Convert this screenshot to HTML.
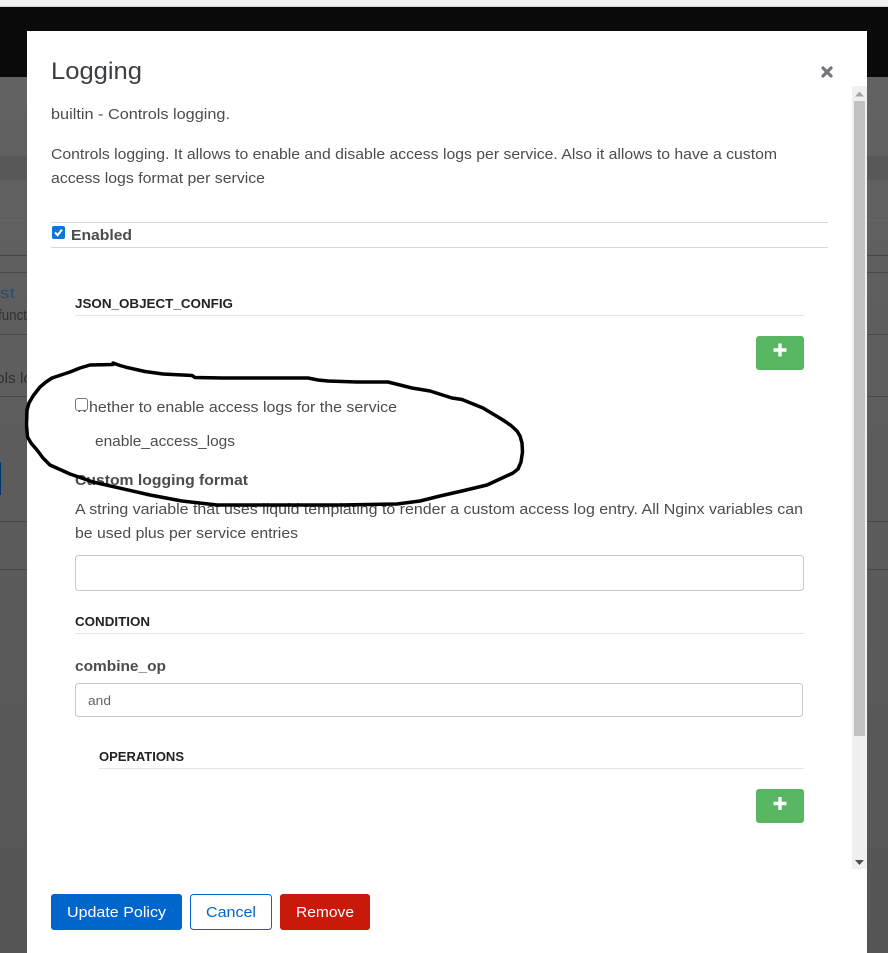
<!DOCTYPE html>
<html lang="en">
<head>
<meta charset="utf-8">
<title>Logging</title>
<style>
html,body{margin:0;padding:0;width:888px;height:953px;overflow:hidden;background:#5a5a5a}
svg{display:block}
text{font-family:"Liberation Sans",sans-serif;font-size:15px;fill:#4a4d50}
.b{font-weight:bold}
.h{font-weight:bold;font-size:13px;fill:#222}
</style>
</head>
<body>
<svg width="888" height="953" viewBox="0 0 888 953" xmlns="http://www.w3.org/2000/svg">
<defs>
<linearGradient id="bg" x1="0" y1="0" x2="0" y2="1"><stop offset="0" stop-color="#636363"/><stop offset="1" stop-color="#555"/></linearGradient>
</defs>
<rect width="888" height="953" fill="url(#bg)"/>
<rect width="888" height="6" fill="#f5f3f1"/>
<rect y="6" width="888" height="1" fill="#d8d2cc"/>
<rect y="7" width="888" height="70" fill="#0a0a0a"/>
<rect y="156" width="888" height="24" fill="#585858"/>
<rect y="220" width="888" height="1" fill="#666"/>
<rect y="255" width="888" height="1" fill="#444"/>
<rect y="272" width="888" height="1" fill="#484848"/>
<rect y="334" width="888" height="1" fill="#484848"/>
<rect y="396" width="888" height="1" fill="#484848"/>
<rect y="521" width="888" height="1" fill="#484848"/>
<rect y="569" width="888" height="1" fill="#484848"/>
<rect y="462" width="1" height="33" fill="#00366b"/>
<text x="0" y="298" style="fill:#2b4a70" textLength="15" lengthAdjust="spacingAndGlyphs">st</text>
<text x="-2" y="320" style="fill:#2f2f2f" textLength="29" lengthAdjust="spacingAndGlyphs">funct</text>
<text x="-4" y="383" style="fill:#2f2f2f" textLength="36" lengthAdjust="spacingAndGlyphs">ols lo</text>

<rect x="27" y="31" width="840" height="922" fill="#fff"/>

<text x="51" y="79" style="font-size:24px;fill:#3c3f42" textLength="91" lengthAdjust="spacingAndGlyphs">Logging</text>
<path d="M823 68L831 76M831 68L823 76" stroke="#72767b" stroke-width="3.200" fill="none" stroke-linecap="round"/>

<text x="51" y="119" textLength="179" lengthAdjust="spacingAndGlyphs">builtin - Controls logging.</text>
<text x="51" y="159" textLength="726" lengthAdjust="spacingAndGlyphs">Controls logging. It allows to enable and disable access logs per service. Also it allows to have a custom</text>
<text x="51" y="183" textLength="214" lengthAdjust="spacingAndGlyphs">access logs format per service</text>

<rect x="51" y="222" width="777" height="1" fill="#d9d9d9"/>
<rect x="51" y="247" width="777" height="1" fill="#d9d9d9"/>
<rect x="52" y="226" width="13" height="13" rx="2" fill="#0b76e0"/>
<path d="M55 232.500L57.600 235.200L62 229.600" stroke="#fff" stroke-width="2.100" fill="none"/>
<text class="b" x="71" y="240" textLength="61" lengthAdjust="spacingAndGlyphs">Enabled</text>

<text class="h" x="75" y="308" textLength="158" lengthAdjust="spacingAndGlyphs">JSON_OBJECT_CONFIG</text>
<rect x="75" y="315" width="729" height="1" fill="#e4e4e4"/>
<rect x="756" y="336" width="48" height="34" rx="3" fill="#58b561"/>
<path d="M773.500 350H786.500M780 343.500V356.500" stroke="#fff" stroke-width="3.400" fill="none"/>

<text x="76" y="412" textLength="12" lengthAdjust="spacingAndGlyphs">W</text>
<rect x="75.500" y="398.500" width="12" height="12" rx="2.500" fill="#fff" stroke="#777"/>
<text x="89" y="412" textLength="308" lengthAdjust="spacingAndGlyphs">hether to enable access logs for the service</text>
<text x="95" y="446" textLength="140" lengthAdjust="spacingAndGlyphs">enable_access_logs</text>

<text class="b" x="75" y="485" textLength="173" lengthAdjust="spacingAndGlyphs">Custom logging format</text>
<text x="75" y="514" textLength="728" lengthAdjust="spacingAndGlyphs">A string variable that uses liquid templating to render a custom access log entry. All Nginx variables can</text>
<text x="75" y="538" textLength="223" lengthAdjust="spacingAndGlyphs">be used plus per service entries</text>
<rect x="75.500" y="555.500" width="728" height="35" rx="3" fill="#fff" stroke="#c8c8c8"/>

<text class="h" x="75" y="626" textLength="75" lengthAdjust="spacingAndGlyphs">CONDITION</text>
<rect x="75" y="633" width="729" height="1" fill="#e4e4e4"/>
<text class="b" x="75" y="671" textLength="91" lengthAdjust="spacingAndGlyphs">combine_op</text>
<rect x="75.500" y="683.500" width="727" height="33" rx="3" fill="#fff" stroke="#c8c8c8"/>
<text x="88" y="705" style="font-size:13px;fill:#666" textLength="23" lengthAdjust="spacingAndGlyphs">and</text>

<text class="h" x="99" y="761" textLength="85" lengthAdjust="spacingAndGlyphs">OPERATIONS</text>
<rect x="99" y="768" width="705" height="1" fill="#e4e4e4"/>
<rect x="756" y="789" width="48" height="34" rx="3" fill="#58b561"/>
<path d="M773.500 803.500H786.500M780 797V810" stroke="#fff" stroke-width="3.400" fill="none"/>

<rect x="852" y="86" width="15" height="783" fill="#f0f0f0"/>
<rect x="854" y="101" width="11" height="635" fill="#c2c2c2"/>
<path d="M859.500 91.500L864 96.500H855Z" fill="#a3a3a3"/>
<path d="M855 860H864L859.500 865Z" fill="#505050"/>

<rect x="51" y="894" width="131" height="36" rx="3" fill="#06c"/>
<text x="67" y="917" style="fill:#fff" textLength="99" lengthAdjust="spacingAndGlyphs">Update Policy</text>
<rect x="190.500" y="894.500" width="81" height="35" rx="3" fill="#fff" stroke="#06c"/>
<text x="206" y="917" style="fill:#06c" textLength="50" lengthAdjust="spacingAndGlyphs">Cancel</text>
<rect x="280" y="894" width="90" height="36" rx="3" fill="#c9190b"/>
<text x="296" y="917" style="fill:#fff" textLength="58" lengthAdjust="spacingAndGlyphs">Remove</text>

<path d="M113 363L120 365.500L127 367.500L145 371.500L163 374L192 375.500L195 377.500L223 378L280 378L308 378L318 380L328 381L357 382L388 382L400 385L412 388L430 391L452 398L462 399.500L483 408L503 420L511 425.500L517 431L520 436L522 443L522.500 452L521 462L518 469L513 473L500 479L487 485L462 491L440 496L420 501L397 504L340 505L280 505L217 505L182 501L150 495L93 482L70 474L50 465L43 458L37 450L31 443L27.500 437L26.500 425L27 410L29 403L33 396L40 387L46 382L52 378L70 372L80 368L90 365L113 364.500" fill="none" stroke="#000" stroke-width="3.500" stroke-linejoin="round" stroke-linecap="round"/>
</svg>
</body>
</html>
